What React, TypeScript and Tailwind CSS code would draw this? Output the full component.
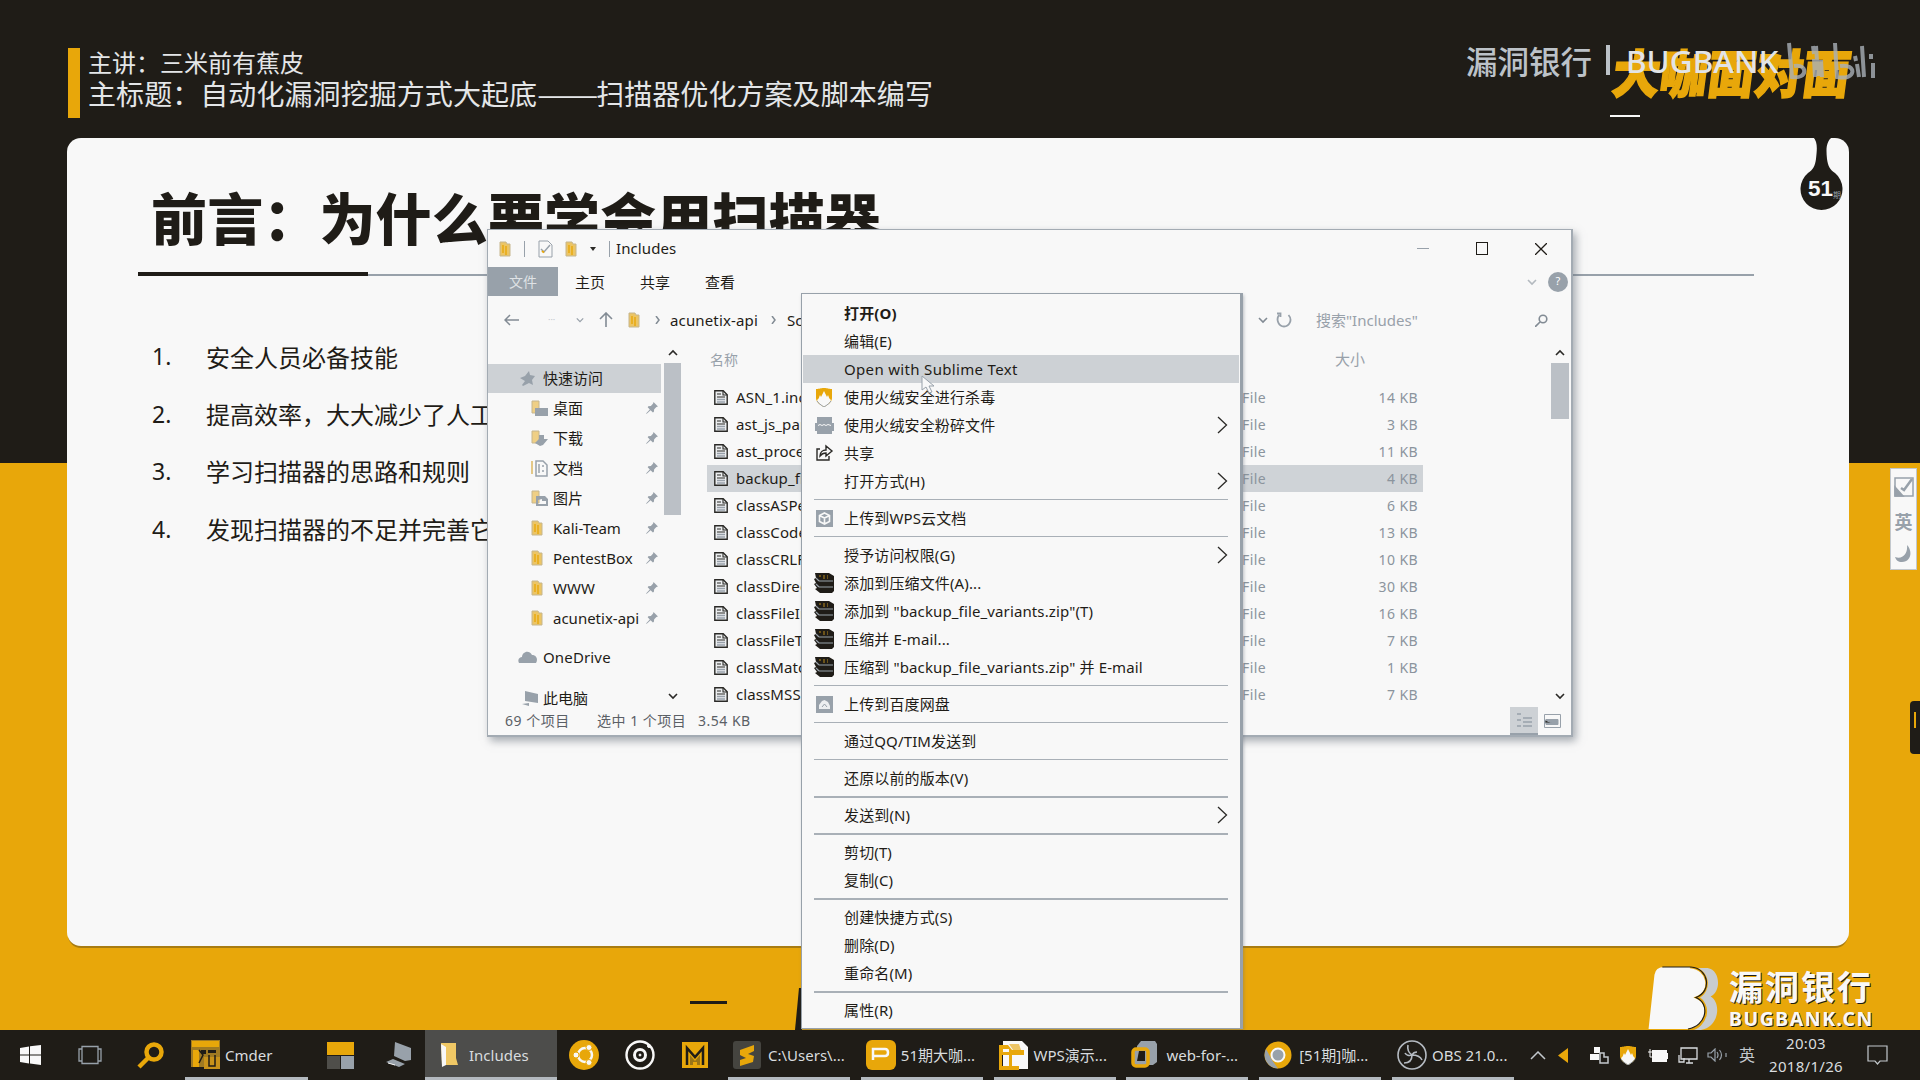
import React from "react";

type P = { children?: React.ReactNode; c?: string };

const Folder = ({ c = "w-3 h-4" }: P) => (
  <svg className={c} viewBox="0 0 12 16" preserveAspectRatio="none">
    <path d="M1 1h6l1 2h3v12H1z" fill="#ecc565" stroke="#c6b68e" strokeWidth="1" />
    <path d="M4 4v8M7 5v9" stroke="#e8a70a" strokeWidth="1.4" />
  </svg>
);

const Pin = () => (
  <svg className="h-3 w-3" viewBox="0 0 12 12" fill="#98a1aa">
    <path d="M7.5 0 12 4.5l-1.6.4-2.2 2.3-.3 2.6-1 .6-2.3-2.2L1 11.6 0 12l.5-1.1 3.3-3.5L1.7 5.2l.6-1 2.6-.2L7.1 1.6z" />
  </svg>
);

const FileIcon = () => (
  <svg className="h-[15px] w-[14px]" viewBox="0 0 14 15" fill="none" stroke="#2b2a27">
    <path d="M.8.8h8.4l4 4v9.4H.8z" fill="#eceef0" strokeWidth="1.4" />
    <path d="M9 1v4h4M3 4h4M3 7h8" strokeWidth="1.1" />
    <path d="M3 9.500h8M3 12h8" strokeWidth="1.600" stroke="#98a1aa" />
  </svg>
);

const Chevron = ({ c = "w-2.5 h-2", d = "M1 1l4 4 4-4", s = "#2b2a27" }: P & { d?: string; s?: string }) => (
  <svg className={c} viewBox="0 0 10 6" fill="none" stroke={s} strokeWidth="1.6">
    <path d={d} />
  </svg>
);

const Right = () => (
  <svg className="h-[18px] w-[11px]" viewBox="0 0 11 18" fill="none" stroke="#2b2a27" strokeWidth="1.3">
    <path d="M1 1l8.5 8L1 17" />
  </svg>
);

const Shield = () => (
  <svg className="h-[19px] w-4" viewBox="0 0 16 19">
    <path d="M0 1c4 0 4-1 8-1s4 1 8 1v9c0 4-4 7-8 9-4-2-8-5-8-9z" fill="#e8a70a" />
    <path d="M1 12c2-1 2-3 3-5l1 2 3-6 3 6 1-2c1 2 1 4 3 5-1 3-4 5-7 7-3-2-6-4-7-7z" fill="#f8f8f8" />
    <path d="M1 13c1 2 4 4 7 6 3-2 6-4 7-6" fill="none" stroke="#98a1aa" />
  </svg>
);

const Shred = () => (
  <svg className="h-[19px] w-[19px]" viewBox="0 0 19 19" fill="#98a1aa">
    <path d="M2 1h15v6h2v8h-2v3H2v-3H0V7h2z" />
    <path d="M3 9.5l2-1 2 1 2-1 2 1 2-1 3 1" stroke="#f8f8f8" fill="none" />
  </svg>
);

const Share = () => (
  <svg className="h-[18px] w-[19px]" viewBox="0 0 19 18" fill="none" stroke="#2b2a27" strokeWidth="1.4">
    <path d="M5 5H2v11h12v-4" />
    <path d="M5 12c0-4 3-6 6-6V2l6 5-6 5V9C8 9 6.500 10 5 12z" />
  </svg>
);

const Wps = () => (
  <svg className="h-[17px] w-[17px]" viewBox="0 0 17 17">
    <path d="M0 0h17v17H0z" fill="#98a1aa" />
    <path d="M8.500 3l5 2.500v6L8.500 14l-5-2.500v-6zM3.500 5.500l5 2.500 5-2.500M8.500 8v6" fill="none" stroke="#f8f8f8" strokeWidth="1.6" />
  </svg>
);

const Baidu = () => (
  <svg className="h-[17px] w-[17px]" viewBox="0 0 17 17">
    <path d="M0 0h17v17H0z" fill="#98a1aa" />
    <path d="M3 13V9l3-4 2.500-1L12 6l2 4v3z" fill="#eceef0" />
    <path d="M6 11l2.500-3 2.500 3" fill="none" stroke="#98a1aa" />
  </svg>
);

const Rar = () => (
  <svg className="h-5 w-5" viewBox="0 0 20 20">
    <path d="M1 0h14l5 3v15l-2 2H6l-5-4 2-1-3-4 2-1-2-4 2-1z" fill="#1f1c17" />
    <path d="M5 8h14M5 14h14M2 5l3 3M2 11l3 3" stroke="#98a1aa" strokeWidth="1.200" />
    <path d="M5 3h9M9 5h5" stroke="#b78a1f" strokeWidth="1.200" strokeDasharray="2 2" />
  </svg>
);

type Item = { t?: string; icon?: React.ReactNode; sub?: boolean; bold?: boolean; hot?: boolean };
const menu: Item[] = [
  { t: "打开(O)", bold: true },
  { t: "编辑(E)" },
  { t: "Open with Sublime Text", hot: true },
  { t: "使用火绒安全进行杀毒", icon: <Shield /> },
  { t: "使用火绒安全粉碎文件", icon: <Shred />, sub: true },
  { t: "共享", icon: <Share /> },
  { t: "打开方式(H)", sub: true },
  {},
  { t: "上传到WPS云文档", icon: <Wps /> },
  {},
  { t: "授予访问权限(G)", sub: true },
  { t: "添加到压缩文件(A)...", icon: <Rar /> },
  { t: '添加到 "backup_file_variants.zip"(T)', icon: <Rar /> },
  { t: "压缩并 E-mail...", icon: <Rar /> },
  { t: '压缩到 "backup_file_variants.zip" 并 E-mail', icon: <Rar /> },
  {},
  { t: "上传到百度网盘", icon: <Baidu /> },
  {},
  { t: "通过QQ/TIM发送到" },
  {},
  { t: "还原以前的版本(V)" },
  {},
  { t: "发送到(N)", sub: true },
  {},
  { t: "剪切(T)" },
  { t: "复制(C)" },
  {},
  { t: "创建快捷方式(S)" },
  { t: "删除(D)" },
  { t: "重命名(M)" },
  {},
  { t: "属性(R)" },
];

const files: [string, string][] = [
  ["ASN_1.inc", "14 KB"],
  ["ast_js_parser.inc", "3 KB"],
  ["ast_process.inc", "11 KB"],
  ["backup_file_variants.inc", "4 KB"],
  ["classASPectSensor.inc", "6 KB"],
  ["classCode.inc", "13 KB"],
  ["classCRLF.inc", "10 KB"],
  ["classDirectory.inc", "30 KB"],
  ["classFileInclusion.inc", "16 KB"],
  ["classFileTampering.inc", "7 KB"],
  ["classMatch.inc", "1 KB"],
  ["classMSSQL.inc", "7 KB"],
];

const Overlay = ({ d }: { d: string }) => (
  <svg className="h-[17px] w-[17px]" viewBox="0 0 17 17">
    <path d="M1 1h7v12H1z" fill="#efcf85" stroke="#c6b68e" />
    <path d={d} fill="#98a1aa" />
  </svg>
);

const nav: [string, React.ReactNode][] = [
  ["桌面", <Overlay d="M4 8h13v8H4z" />],
  ["下载", <Overlay d="M8 5h5v4h4l-5 6-3 1-5-3 4-4z" />],
  ["文档", <svg className="h-[17px] w-[17px]" viewBox="0 0 17 17" fill="none" stroke="#98a1aa" strokeWidth="1.500"><path d="M1 1v13" stroke="#dcb963" /><path d="M5 1h7l4 4v11H5zM8 4v9M12 5v2M11 11h2" /></svg>],
  ["图片", <Overlay d="M5 6h9l3 3v7H5zm2 4v4h8v-3h-4V9z" />],
  ["Kali-Team", <Folder />],
  ["PentestBox", <Folder />],
  ["WWW", <Folder />],
  ["acunetix-api", <Folder />],
];

function Explorer() {
  return (
    <div className="absolute left-[487px] top-[229px] flex h-[508px] w-[1086px] flex-col border border-r-2 border-b-2 border-[#a3abb3] bg-[#f8f8f8] text-[15px] shadow-[3px_4px_8px_rgba(100,110,120,0.55)]">
      <div className="flex h-[37px] items-center">
        <div className="ml-[11px] flex w-[111px] items-center justify-between">
          <Folder />
          <i className="h-4 w-px bg-[#98a1aa]" />
          <svg className="h-[18px] w-[15px]" viewBox="0 0 15 18" fill="none" stroke="#98a1aa">
            <path d="M1 1h9l4 4v12H1z" />
            <path d="M3 9l3 3 6-7" strokeWidth="1.500" />
            <path d="M4 11l2 1.500" stroke="#e8a70a" strokeWidth="2" />
          </svg>
          <Folder />
          <svg className="h-1.5 w-1.5" viewBox="0 0 6 6"><path d="M0 1h6L3 5z" fill="#2b2a27" /></svg>
          <i className="h-4 w-px bg-[#98a1aa]" />
        </div>
        <span className="ml-1.5 tracking-[.1px]">Includes</span>
        <div className="ml-auto mr-[24px] flex items-center gap-[47px]">
          <i className="h-px w-3 bg-[#98a1aa]" />
          <i className="h-[13px] w-3 border-[1.500px] border-[#1f1c17]" />
          <svg className="h-3 w-3" viewBox="0 0 12 12" stroke="#1f1c17" strokeWidth="1.300"><path d="M0 0l12 12M12 0L0 12" /></svg>
        </div>
      </div>
      <div className="flex h-[29px] items-center">
        <div className="flex h-full w-[70px] items-center justify-center bg-[#98a1aa] text-[14px] text-[#dfe2e5]">文件</div>
        <span className="ml-[17px] w-[65px] pt-0.5">主页</span>
        <span className="w-[65px] pt-0.5">共享</span>
        <span className="pt-0.5">查看</span>
        <div className="ml-auto mr-[3px] flex items-center gap-[11px]">
          <Chevron s="#b3b9bf" />
          <i className="flex h-5 w-5 items-center justify-center rounded-full bg-[#98a1aa] text-[11px] not-italic text-white">?</i>
        </div>
      </div>
      <div className="flex h-12 items-center">
        <svg className="ml-4 h-3.5 w-4" viewBox="0 0 16 14" fill="none" stroke="#828b94" strokeWidth="1.500"><path d="M15 7H1M6 2L1 7l5 5" /></svg>
        <span className="ml-[28px] w-[10px] text-[9px] text-[#c3c8cd]">···</span>
        <Chevron c="ml-[18px] h-1.5 w-2" s="#98a1aa" />
        <svg className="ml-[15px] h-4 w-3.5" viewBox="0 0 14 16" fill="none" stroke="#828b94" strokeWidth="1.600"><path d="M7 15V1M1 7l6-6 6 6" /></svg>
        <Folder c="ml-[15px] h-4 w-3" />
        <svg className="ml-[15px] h-2 w-[5px]" viewBox="0 0 5 8" fill="none" stroke="#828b94" strokeWidth="1.500"><path d="M1 0l3 4-3 4" /></svg>
        <span className="ml-[10px] w-[101px] tracking-[.15px]">acunetix-api</span>
        <svg className="h-2 w-[5px]" viewBox="0 0 5 8" fill="none" stroke="#828b94" strokeWidth="1.500"><path d="M1 0l3 4-3 4" /></svg>
        <span className="ml-[11px] w-[465px]">Scripts</span>
        <Chevron c="ml-[6px] h-2 w-2.5" s="#828b94" />
        <svg className="ml-[8px] mr-px h-4 w-4" viewBox="0 0 16 16" fill="none" stroke="#98a1aa" strokeWidth="1.800"><path d="M3 3C-.5 8 3 14.500 8 14.500S17 8 12.500 3M1 1.500h3.500V5" /></svg>
        <span className="ml-[23px] text-[#98a1aa]">搜索"Includes"</span>
        <svg className="ml-auto mr-[23px] h-[13px] w-[13px]" viewBox="0 0 13 13" fill="none" stroke="#828b94" strokeWidth="1.600"><circle cx="8" cy="5" r="3.800" /><path d="M5 8l-5 5" /></svg>
      </div>
      <div className="flex h-[362px]">
        <div className="h-full w-[176px] pt-5">
          <div className="flex h-[29px] w-[173px] items-center bg-[#cdd1d5] pl-[32px]">
            <svg className="mr-2 h-[15px] w-[15px]" viewBox="0 0 15 15" fill="#98a1aa"><path d="M9 0l1 4 5 1-3 4 1 5-4-2-6 3-1-1 3-4-5-3 5-2z" /></svg>
            快速访问
          </div>
          {nav.map(([t, ic]) => (
            <div key={t} className="flex h-[30px] items-center pl-[43px]">
              <span className="flex w-[22px]">{ic}</span>
              <span className="w-[93px] whitespace-nowrap">{t}</span>
              <Pin />
            </div>
          ))}
          <div className="mt-[9px] flex h-[31px] items-center pl-[30px] tracking-[.15px]">
            <svg className="mr-1.5 h-[13px] w-[19px]" viewBox="0 0 19 13" fill="#98a1aa"><path d="M1 12C-1 8 2 6 4 6c0-5 7-8 10-2 5 0 6 5 4 8z" /></svg>
            OneDrive
          </div>
          <div className="mt-[10px] flex h-[31px] items-center pl-[34px]">
            <svg className="mr-[5px] h-[15px] w-4" viewBox="0 0 16 15" fill="#98a1aa"><path d="M3 0l13 3v9L3 10zM0 13l7-1v3z" /></svg>
            此电脑
          </div>
        </div>
        <div className="flex h-full w-[17px] flex-col items-center pt-[5px]">
          <Chevron d="M1 5l4-4 4 4" />
          <div className="mt-1.5 h-[152px] w-[17px] bg-[#bbc0c6]" />
          <Chevron c="mt-auto mb-1.5 h-2 w-2.5" />
        </div>
        <div className="ml-[26px] flex w-[716px] flex-col">
          <div className="flex h-[39.500px] shrink-0 items-center pl-[3px] pb-[9px] text-[14px] text-[#98a1aa]">
            <span className="w-[625px]">名称</span>
            <span className="text-[15px]">大小</span>
          </div>
          {files.map(([n, s], i) => (
            <div key={n} className={i === 3 ? "flex h-[27px] shrink-0 items-center bg-[#cfd3d7] pl-[7px] pr-[5px]" : "flex h-[27px] shrink-0 items-center pl-[7px] pr-[5px]"}>
              <FileIcon />
              <span className="ml-2 w-[506px] tracking-[.1px]">{n}</span>
              <span className="text-[14px] tracking-[.4px] text-[#8b949d]">File</span>
              <span className="ml-auto text-[14px] tracking-[.4px] text-[#8b949d]">{s}</span>
            </div>
          ))}
        </div>
        <div className="ml-auto flex h-full w-[20px] flex-col items-center pr-0.5 pt-[5px]">
          <Chevron d="M1 5l4-4 4 4" />
          <div className="mt-1.5 h-[56px] w-[18px] bg-[#bbc0c6]" />
          <Chevron c="mt-auto mb-1.5 h-2 w-2.5" />
        </div>
      </div>
      <div className="flex h-[29px] items-center pl-[17px] text-[14px] tracking-[.5px] text-[#5b6066]">
        <span className="w-[92px]">69 个项目</span>
        <span className="w-[101px] whitespace-nowrap">选中 1 个项目</span>
        <span>3.54 KB</span>
        <span className="ml-auto flex h-7 w-[28px] items-center justify-center border-b-2 border-[#98a1aa] bg-[#cdd1d5]">
          <svg className="h-4 w-4" viewBox="0 0 16 16" stroke="#98a1aa" strokeWidth="1.500"><path d="M1 2h4M1 8h4M1 14h4M7 6h9M7 10h9M7 14h9" /></svg>
        </span>
        <svg className="ml-[6px] mr-[10px] h-[14px] w-[17px]" viewBox="0 0 17 14" fill="none" stroke="#98a1aa"><path d="M.5.500h16v13H.5z" /><path d="M2 5.500h12v5H2z" fill="#98a1aa" /><path d="M1 6l7 3H1z" fill="#1f1c17" /></svg>
      </div>
    </div>
  );
}

function ContextMenu() {
  return (
    <div className="absolute left-[801px] top-[293px] h-[736px] w-[442px] border border-r-[3px] border-[#98a1aa] bg-[#f8f8f8] pt-[5px] text-[15px] shadow-[1px_2px_3px_rgba(100,110,120,0.4)]">
      {menu.map((m, i) =>
        m.t ? (
          <div key={i} className={m.hot ? "mx-px flex h-[28px] items-center bg-[#cdd1d5] pl-[10px] pr-[11px] tracking-[.33px]" : "mx-px flex h-[28px] items-center pl-[10px] pr-[11px] tracking-[.13px]"}>
            <span className="mr-[9px] flex w-[22px] justify-center">{m.icon}</span>
            <span className={m.bold ? "whitespace-pre font-bold" : "whitespace-pre"}>{m.t}</span>
            {m.sub && <span className="ml-auto"><Right /></span>}
          </div>
        ) : (
          <div key={i} className="flex h-[9.060px] items-center pl-3 pr-[12px]">
            <i className="h-[1.500px] w-full bg-[#a9b0b7]" />
          </div>
        )
      )}
      <svg className="absolute left-[119px] top-[81px] h-5 w-4" viewBox="0 0 16 20" fill="#f8f8f8" stroke="#98a1aa">
        <path d="M1 1v14l4-3 3 6 3-1-3-6h5z" />
      </svg>
    </div>
  );
}

const Sublime = () => (
  <svg className="h-[28px] w-[28px]" viewBox="0 0 28 28"><rect width="28" height="28" rx="3" fill="#45443f" /><path d="M7 9l14-5v6l-6 3 6 2-1 6L7 25v-6l6-2-6-3z" fill="#e8a70a" /></svg>
);
const Ppt = () => (
  <svg className="h-[30px] w-[30px]" viewBox="0 0 30 30"><rect width="30" height="30" rx="6" fill="#e8a70a" /><path d="M7 20V9h12q3 0 3 3.500t-3 3.500H8" fill="none" stroke="#f8f8f8" strokeWidth="2.500" /></svg>
);
const WpsP = () => (
  <svg className="h-[29px] w-[29px]" viewBox="0 0 29 29"><path d="M4 0h19l6 6v22H4z" fill="#f8f8f8" /><path d="M0 4h9l4 5h12v5H0zM0 14h3v15H0zM3 25h17v4H3zM10 14h3v12h-3z" fill="#e8a70a" /><path d="M4 8h6v3H4z" fill="#f8f8f8" /><path d="M10 3h10l2 6h-8z" fill="#edc566" /></svg>
);
const Vm = () => (
  <svg className="h-[28px] w-[26px]" viewBox="0 0 26 28"><path d="M10 0h14l2 3v18l-4 3H6V5z" fill="#98a1aa" /><rect x="2" y="8" width="15" height="17" rx="3" fill="#98a1aa" stroke="#e8a70a" strokeWidth="3.500" /><path d="M8 10h6v10H6z" fill="#1f1c17" /></svg>
);
const Chrome = () => (
  <svg className="h-[28px] w-[28px]" viewBox="0 0 28 28"><circle cx="14" cy="14" r="13.500" fill="#e8a70a" /><path d="M2 8l6 11 6 8.500A13.500 13.500 0 012 8z" fill="#98a1aa" /><circle cx="14" cy="14" r="6.500" fill="#98a1aa" stroke="#f8f8f8" strokeWidth="2" /></svg>
);
const Obs = () => (
  <svg className="h-[30px] w-[30px]" viewBox="0 0 30 30" fill="none" stroke="#b5bbc2"><circle cx="15" cy="15" r="14" strokeWidth="1.600" /><path d="M11 5c-1 5 1 8 4 10M15 15c5 0 8 1 10 5M15 15c0 5-3 8-8 8M15 15c1-2 3-3 5-3M15 15c-3 1-6 0-7-2" strokeWidth="1.600" /></svg>
);

const apps: [string, React.ReactNode][] = [
  ["C:\\Users\\...", <Sublime />],
  ["51期大咖...", <Ppt />],
  ["WPS演示...", <WpsP />],
  ["web-for-...", <Vm />],
  ["[51期]咖...", <Chrome />],
  ["OBS 21.0...", <Obs />],
];

function Taskbar() {
  return (
    <div className="relative flex h-[50px] w-full items-stretch bg-[#1f1c17] text-[15px] text-[#d9dcdf]">
      <div className="flex w-[60px] items-center justify-center">
        <svg className="h-5 w-[21px]" viewBox="0 0 21 20" fill="#f8f8f8"><path d="M0 3l9-1.500V9.500H0zM10 1.300L21 0v9.500H10zM0 10.500h9v8L0 17zM10 10.500h11V20l-11-1.500z" /></svg>
      </div>
      <div className="flex w-[60px] items-center justify-center">
        <svg className="h-[20px] w-[24px]" viewBox="0 0 24 20" fill="none" stroke="#98a1aa" strokeWidth="1.300"><path d="M4 1.500h16v17H4zM3.500 4H1v12h2.500M20.500 4H23v12h-2.500" /></svg>
      </div>
      <div className="flex w-[61px] items-center justify-center">
        <svg className="h-[27px] w-[27px]" viewBox="0 0 27 27" fill="none" stroke="#e8a70a"><circle cx="17" cy="10" r="7.500" strokeWidth="4.500" /><path d="M11 16l-9 9" strokeWidth="4.500" /></svg>
      </div>
      <div className="ml-1 flex w-[123px] items-center border-b-[3px] border-[#b3b9bf] pl-1.5 pt-[3px]">
        <svg className="mr-[5px] h-[30px] w-[29px]" viewBox="0 0 29 30"><path d="M0 0h29v27H0z" fill="#a07a22" /><path d="M1 1h27v6H1zM2 10h6v17H2z" fill="#e8a70a" /><path d="M10 10h5v4h-5zM17 10h8v3h-8z" fill="#1f1c17" /><path d="M13 17h16v12H13z" fill="#c8921a" /><path d="M8 10l4 5-4 8M18 15v11h6V15" fill="none" stroke="#1f1c17" strokeWidth="1.500" /></svg>
        Cmder
      </div>
      <div className="flex w-[64px] items-center justify-center">
        <svg className="h-[27px] w-[27px]" viewBox="0 0 27 27"><path d="M0 0h27v13H0z" fill="#e8a70a" /><path d="M14 14h13v13H14z" fill="#98a1aa" /><path d="M0 14h13v13H0z" fill="#4f4e4a" /></svg>
      </div>
      <div className="flex w-[53px] items-center justify-center">
        <svg className="h-[26px] w-[28px]" viewBox="0 0 28 26" fill="#98a1aa"><path d="M10 0l16 6v12l-6 1-11-5zM1 20l7-3 12 5-6 3z" /><path d="M3 21l7 2" stroke="#f8f8f8" /></svg>
      </div>
      <div className="flex w-[132px] items-center border-b-[3px] border-[#b3b9bf] bg-[#4d4d4b] pl-[15px] pt-[3px]">
        <svg className="mr-[11px] h-[24px] w-[18px]" viewBox="0 0 18 24"><path d="M1 0h15v15l2 7H2z" fill="#f0c865" /><path d="M1 1l5 3v18l-4 2z" fill="#f8f8f8" /></svg>
        Includes
      </div>
      <div className="flex w-[54px] items-center justify-center">
        <svg className="h-[30px] w-[30px]" viewBox="0 0 30 30" fill="none"><circle cx="15" cy="15" r="15" fill="#e8a70a" /><circle cx="16" cy="15" r="7" stroke="#f8f8f8" strokeWidth="2.500" /><g fill="#f8f8f8" stroke="#e8a70a"><circle cx="7" cy="15" r="3" /><circle cx="20" cy="7.500" r="3" /><circle cx="20" cy="22.500" r="3" /></g></svg>
      </div>
      <div className="flex w-[58px] items-center justify-center">
        <svg className="h-[30px] w-[30px]" viewBox="0 0 30 30" fill="none" stroke="#f8f8f8"><circle cx="15" cy="15" r="13.500" strokeWidth="2.400" /><circle cx="15" cy="15" r="5.500" strokeWidth="3" /><circle cx="15" cy="15" r="1" fill="#f8f8f8" /><circle cx="24" cy="6" r="1.500" fill="#f8f8f8" /></svg>
      </div>
      <div className="flex w-[52px] items-center justify-center">
        <svg className="h-[26px] w-[26px]" viewBox="0 0 26 26"><path d="M0 0h26v26H0z" fill="#e8a70a" /><path d="M5 23V6l8 9 8-9v17" fill="none" stroke="#1f1c17" strokeWidth="2.500" /><path d="M8 13l5 6 5-6v10h-3v-3h-4v3H8z" fill="#9b7517" /></svg>
      </div>
      <div className="ml-[7px] flex gap-[10.800px]">
        {apps.map(([t, icon]) => (
          <div key={t} className="flex w-[122px] items-center border-b-[3px] border-[#b3b9bf] pl-[5px] pt-[3px]">
            <span className="flex w-[35px]">{icon}</span>
            <span className="whitespace-nowrap">{t}</span>
          </div>
        ))}
      </div>
      <div className="ml-[16px] flex items-center">
        <svg className="h-[9px] w-4" viewBox="0 0 16 9" fill="none" stroke="#c3c8cd" strokeWidth="1.500"><path d="M1 8l7-7 7 7" /></svg>
        <svg className="ml-[12px] h-[15px] w-[12px]" viewBox="0 0 12 15" fill="#e8a70a"><path d="M0 7.500L10 0v15z" /></svg>
        <svg className="ml-[20px] h-[18px] w-[19px]" viewBox="0 0 19 18" fill="#f8f8f8"><path d="M4 1h6v6H4zM0 8h9v6H0z" /><path d="M10 7h4v4h4v6h-8z" fill="none" stroke="#c3c8cd" strokeWidth="1.500" /></svg>
        <span className="ml-[11px]"><Shield /></span>
        <svg className="ml-[12px] h-[13px] w-[20px]" viewBox="0 0 20 13" fill="#f8f8f8"><path d="M4 1h15v3h1v6h-1v3H4z" /><path d="M0 3h6M2 0v8h3" stroke="#f8f8f8" fill="none" /></svg>
        <svg className="ml-[10px] h-[17px] w-[20px]" viewBox="0 0 20 17" fill="none" stroke="#d9dcdf" strokeWidth="1.300"><path d="M3 1h16v11H3zM8 16h7M11 12v4M1 8v7h5v-4" /></svg>
        <svg className="ml-[9px] h-[14px] w-[20px]" viewBox="0 0 20 14" fill="none" stroke="#98a1aa" strokeWidth="1.200"><path d="M1 5h3l4-4v12L4 9H1zM10 4q2 3 0 6M12.500 2q4 5 0 10M19 5v4" /></svg>
        <span className="ml-[12px] text-[16px] leading-none text-[#c3c8cd]">英</span>
        <div className="ml-[13px] w-[76px] text-center text-[15px] leading-[23px] tracking-[.3px]">
          <div>20:03</div>
          <div>2018/1/26</div>
        </div>
        <svg className="ml-[23px] h-[20px] w-[21px]" viewBox="0 0 21 20" fill="none" stroke="#c3c8cd" strokeWidth="1.200"><path d="M1 1h19v15h-7l-2.500 3L8 16H1z" /></svg>
      </div>
    </div>
  );
}

export default function App() {
  return (
    <div className="relative flex h-[1080px] w-[1920px] flex-col overflow-hidden bg-[#e8a70a] font-['Noto_Sans','Noto_Sans_CJK_SC',sans-serif] text-[#1f1c17]">
      <div className="relative h-[1030px]">
        <div className="h-[463px] bg-[#1f1c17] pl-[68px] pt-12">
          <div className="flex h-[70px] border-l-[12px] border-[#e8a70a] pl-2 text-[#e4e6e8]">
            <div className="-mt-0.5 flex flex-col font-['Noto_Sans_CJK_SC',sans-serif] font-normal">
              <div className="h-[31px] text-[24px] leading-[32px]">主讲：三米前有蕉皮</div>
              <div className="h-[36px] whitespace-nowrap text-[28px] leading-[32px] tracking-[.07px]">
                主标题：自动化漏洞挖掘方式大起底<span className="inline-block w-[59px] origin-left scale-x-[1.310]">——</span>扫描器优化方案及脚本编写
              </div>
            </div>
          </div>
        </div>

        <div className="absolute left-[1609px] top-[44px] origin-bottom-left -skew-x-[8deg] scale-y-[1.080] whitespace-nowrap font-['Noto_Sans_CJK_SC',sans-serif] text-[47.500px] font-black leading-[60px] text-[#e8a70a] [-webkit-text-stroke:1.500px_#e8a70a]">大咖面对面</div>
        <div className="absolute left-[1466px] top-[39px] flex items-center whitespace-nowrap font-['Noto_Sans_CJK_SC',sans-serif] text-[31.500px] font-medium leading-[40px] text-[#bcc2c8]">
          漏洞银行
          <i className="ml-[14px] mr-[16px] h-[30px] w-1 bg-[#bcc2c8]" />
          <span className="pt-0.5 font-['Noto_Sans',sans-serif] text-[31.500px] font-medium text-[#e2e4e7]">BUGBANK</span>
        </div>
        <svg className="absolute left-[1785px] top-[42px] h-[38px] w-[94px]" viewBox="0 0 94 38" fill="none" stroke="#a9b0b7" strokeWidth="4" opacity=".8">
          <path d="M4 1l3 34c16 3 16-14 2-11M28 4l1 8M29 17l1 18M36 18l1 17M50 1l2 34c20 4 20-14 3-11M77 4l2 31M70 14l1 5M72 22l2 13M86 12v5M88 21v15M31 4l2 30" />
        </svg>
        <i className="absolute left-[1610px] top-[115px] h-0.5 w-[30px] bg-[#f8f8f8]" />

        <div className="absolute left-[67px] top-[138px] h-[808px] w-[1782px] rounded-[14px] bg-[#f8f8f8] pl-[85px] font-['Noto_Sans_CJK_SC',sans-serif] shadow-[0_3px_0_-1px_#a87c12]">
          <h1 className="-ml-px pt-[38px] text-[56px] font-black leading-[80px] tracking-[.15px]">前言：为什么要学会用扫描器</h1>
          <div className="-ml-[14px] mt-[15px] flex w-[1616px] items-center">
            <i className="h-1 w-[230px] bg-[#1f1c17]" />
            <i className="mt-[3px] h-0.5 flex-1 bg-[#98a1aa]" />
          </div>
          <ol className="mt-[52px] text-[24px]">
            {["安全人员必备技能", "提高效率，大大减少了人工成本", "学习扫描器的思路和规则", "发现扫描器的不足并完善它们"].map((t, i) => (
              <li key={t} className="flex h-[57.400px] items-center">
                <span className="w-[54px] font-['Noto_Sans',sans-serif] text-[23px]">{i + 1}.</span>
                {t}
              </li>
            ))}
          </ol>
        </div>

        <svg className="absolute left-[1800px] top-[137px] h-[76px] w-[44px]" viewBox="0 0 44 76" fill="#1f1c17">
          <path d="M13 0h19c-6 5-6 12-5 22 1 7 3 11 8 14a21 21 0 1 1-27 0c5-3 7-7 8-14 1-10 2-17-3-22z" />
        </svg>
        <div className="absolute left-[1808px] top-[176px] flex items-end font-['Liberation_Sans',sans-serif] text-[22.500px] font-bold leading-[26px] text-[#f8f8f8]">
          51<span className="font-['Noto_Sans_CJK_SC',sans-serif] text-[8px] font-normal leading-[14px] text-[#98a1aa]">期</span>
        </div>

        <i className="absolute left-[690px] top-[1001px] h-[3px] w-[37px] bg-[#1f1c17]" />
        <svg className="absolute left-[795px] top-[988px] h-[42px] w-[7px]" viewBox="0 0 7 42"><path d="M4 0h3v42H0z" fill="#1f1c17" /></svg>

        <div className="absolute left-[1648px] top-[966px] flex">
          <svg className="h-[65px] w-[73px]" viewBox="0 0 73 66">
            <path d="M50 2h10c13 2 14 24 3 29 11 6 9 31-10 34H42z" fill="#c8ccd0" />
            <path d="M16 1h29c17 1 20 25 4 31 15 6 11 32-9 32H0L6 9q1-8 10-8z" fill="#f8f8f8" />
            <path d="M42 1c19 1 23 25 7 31 15 6 11 30-8 33" fill="none" stroke="#e8a70a" strokeWidth="2.500" />
            <path d="M14 1h29c18 1 22 25 5 31 15 6 11 29-8 32" fill="none" stroke="#1f1c17" strokeWidth="1.200" />
          </svg>
          <div className="ml-2 flex flex-col text-[#f8f8f8] [text-shadow:1px_1px_0_#1f1c17]">
            <span className="-mt-px whitespace-nowrap font-['Noto_Sans_CJK_SC',sans-serif] text-[34px] font-bold leading-[42px] tracking-[2px]">漏洞银行</span>
            <span className="pt-px text-[19.500px] font-bold leading-[22px] tracking-[1.500px]">BUGBANK.CN</span>
          </div>
        </div>

        <div className="absolute left-[1890px] top-[468px] flex h-[102px] w-[27px] flex-col items-center justify-around border border-[#c3c8cd] bg-[#f8f8f8] font-['Noto_Sans_CJK_SC',sans-serif] text-[18px] font-bold leading-none text-[#98a1aa]">
          <svg className="h-5 w-5" viewBox="0 0 20 20" fill="none" stroke="#98a1aa" strokeWidth="1.500"><path d="M1 1h18v18H1z" /><path d="M7 11l3 2 8-11" strokeWidth="2.500" /><path d="M1 10l8 9H1z" fill="#98a1aa" /></svg>
          英
          <svg className="h-[17px] w-[17px]" viewBox="0 0 17 17" fill="#98a1aa"><path d="M12 0c6 6 4 17-5 17-4 0-6-2-7-5 8 3 13-4 12-12z" /></svg>
        </div>
        <div className="absolute left-[1910px] top-[701px] h-[53px] w-[14px] rounded bg-[#1f1c17] pl-1 pt-[11px]">
          <i className="block h-[16px] w-0.5 bg-[#e8a70a]" />
        </div>

        <Explorer />
        <ContextMenu />
      </div>
      <Taskbar />
    </div>
  );
}
